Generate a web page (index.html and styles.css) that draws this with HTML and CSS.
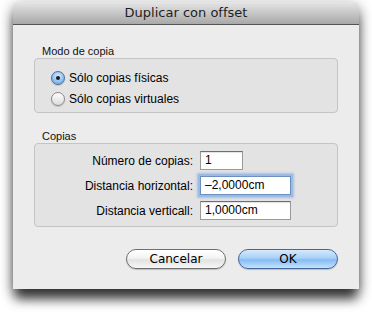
FILE: index.html
```html
<!DOCTYPE html>
<html lang="es">
<head>
   <meta charset="UTF-8">
   <meta name="viewport" content="width=device-width, initial-scale=1.0">
   <title>Duplicar con offset</title>
   <link rel="stylesheet" href="styles.css">
</head>
<body>
   <div class="stage">
      <div class="window">
         <div class="titlebar">Duplicar con offset</div>
         <div class="content">
            <div class="group">
               <div class="group-label">Modo de copia</div>
               <div class="group-box modes">
                  <label class="radio-row">
                     <span class="radio checked"></span>
                     <span>Sólo copias físicas</span>
                  </label>
                  <label class="radio-row">
                     <span class="radio"></span>
                     <span>Sólo copias virtuales</span>
                  </label>
               </div>
            </div>
            <div class="group second">
               <div class="group-label">Copias</div>
               <div class="group-box fields">
                  <span class="field-label">Número de copias:</span>
                  <span class="field short">1</span>
                  <span class="field-label">Distancia horizontal:</span>
                  <span class="field focused">–2,0000cm</span>
                  <span class="field-label">Distancia verticall:</span>
                  <span class="field">1,0000cm</span>
               </div>
            </div>
            <div class="buttons">
               <button class="btn">Cancelar</button>
               <button class="btn btn-default">OK</button>
            </div>
         </div>
      </div>
   </div>
</body>
</html>
```

FILE: styles.css
```css
*{
   margin: 0;
   padding: 0;
   box-sizing: border-box;
}
html, body{
   height: 100%;
}
body{
   background: #fff;
   font-family: "Liberation Sans", Arial, sans-serif;
   font-size: 12px;
   color: #000;
}
.stage{
   min-height: 312px;
   padding: 2px 0 23px 13px;
}
.window{
   width: 346px;
   background: #ececec;
   border-radius: 5px 5px 0 0;
   box-shadow: 0 12px 12px -2px rgba(0,0,0,0.7), 0 4px 14px rgba(0,0,0,0.45);
}
.titlebar{
   height: 23px;
   line-height: 22px;
   text-align: center;
   font-family: "DejaVu Sans", sans-serif;
   font-size: 13px;
   color: #1e1e1e;
   background: linear-gradient(to bottom, #e6e6e6, #a8a8a8);
   border-bottom: 1px solid #535353;
   border-radius: 5px 5px 0 0;
}
.content{
   padding: 20px 21px 20px 21px;
}
.group-label{
   font-size: 11px;
   line-height: 13px;
   margin-left: 8px;
   color: #111;
}
.group.second{
   margin-top: 17px;
}
.group-box{
   border: 1px solid #c4c4c4;
   border-radius: 4px;
   background: #e3e3e3;
}
.modes{
   padding: 8px 0 3px 16px;
}
.radio-row{
   display: flex;
   align-items: center;
   height: 21px;
   gap: 4px;
}
.radio{
   width: 14px;
   height: 14px;
   border-radius: 50%;
   border: 1px solid #8a8a8a;
   background: linear-gradient(to bottom, #fdfdfd, #dcdcdc);
   box-shadow: 0 1px 1px rgba(0,0,0,0.15);
   display: grid;
   place-items: center;
}
.radio.checked{
   border-color: #4a6f9c;
   background: radial-gradient(circle at 50% 35%, #d8ecfd, #7fb5ec 70%, #5c97d8);
}
.radio.checked::after{
   content: '';
   width: 4px;
   height: 4px;
   border-radius: 50%;
   background: #1a1a1a;
}
.fields{
   display: grid;
   grid-template-columns: 158px auto;
   column-gap: 7px;
   row-gap: 6px;
   align-items: center;
   justify-items: start;
   padding: 7px 0 6px 0;
}
.field-label{
   justify-self: end;
}
.field{
   width: 91px;
   height: 19px;
   line-height: 17px;
   padding: 0 4px;
   background: #fff;
   border: 1px solid #9a9a9a;
   border-top-color: #6e6e6e;
   box-shadow: inset 0 1px 1px rgba(0,0,0,0.12);
}
.field.short{
   width: 43px;
}
.field.focused{
   border-color: #6b8fc0;
   box-shadow: 0 0 0 2px #9cbbe3, 0 0 2px 3px rgba(120,160,215,0.5);
}
.buttons{
   display: flex;
   justify-content: flex-end;
   gap: 12px;
   margin-top: 22px;
}
.btn{
   width: 100px;
   height: 20px;
   border-radius: 10px;
   border: 1px solid #6f6f6f;
   font-family: "DejaVu Sans", sans-serif;
   font-size: 12px;
   color: #000;
   background: linear-gradient(to bottom, #ffffff 0%, #f3f3f3 45%, #e2e2e2 55%, #f7f7f7 100%);
   box-shadow: 0 1px 1px rgba(0,0,0,0.2);
}
.btn-default{
   border-color: #44689a;
   background: linear-gradient(to bottom, #d6eafd 0%, #a8d0f7 45%, #84bcf3 55%, #c6e3fd 100%);
}
```
